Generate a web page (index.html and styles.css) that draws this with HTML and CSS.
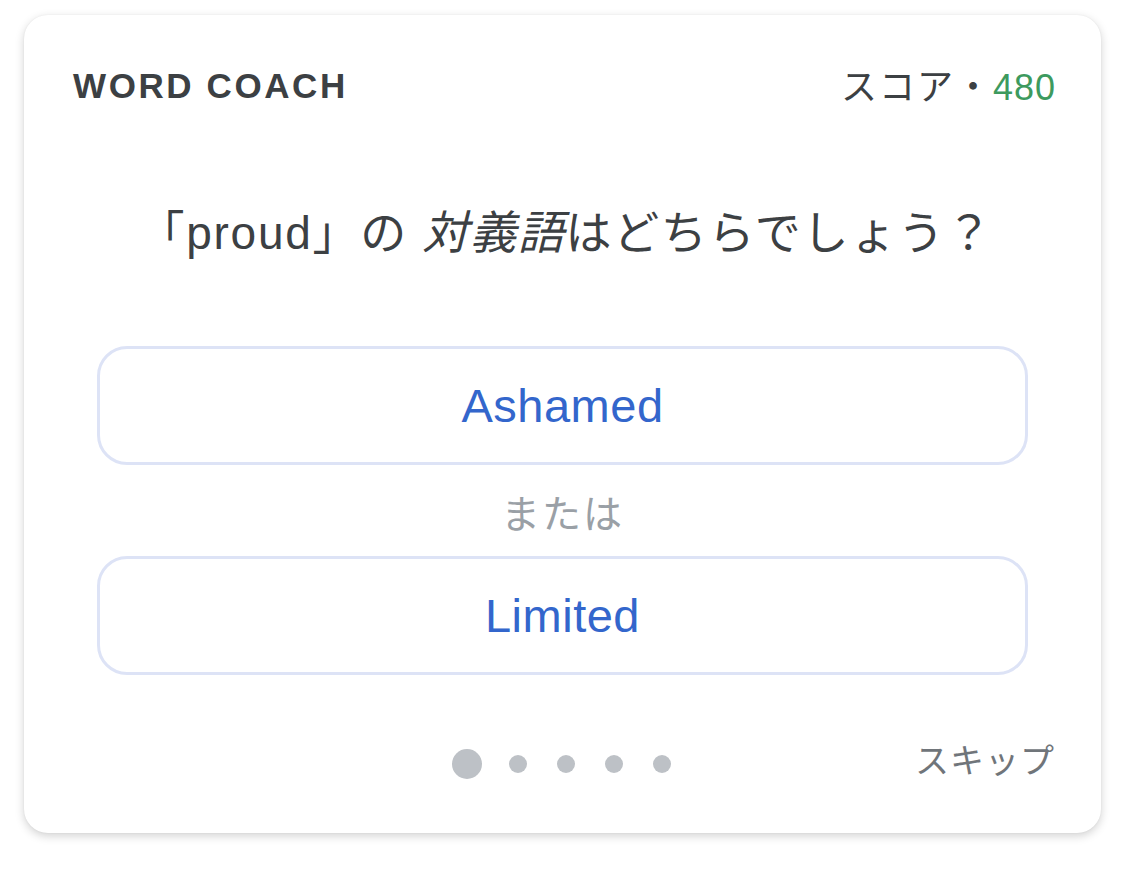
FILE: index.html
```html
<!DOCTYPE html>
<html lang="ja">
<head>
<meta charset="utf-8">
<link rel="stylesheet" href="styles.css">
</head>
<body>
<div class="card">
  <div class="header">
    <div class="title">WORD COACH</div>
    <div class="score">スコア・<span class="num">480</span></div>
  </div>
  <div class="question">「proud」の <em>対義語</em>はどちらでしょう？</div>
  <div class="options">
    <div class="option">Ashamed</div>
    <div class="or">または</div>
    <div class="option">Limited</div>
  </div>
  <div class="footer">
    <div class="dots">
      <span class="dot active"></span>
      <span class="dot"></span>
      <span class="dot"></span>
      <span class="dot"></span>
      <span class="dot"></span>
    </div>
    <div class="skip">スキップ</div>
  </div>
</div>
</body>
</html>
```
FILE: styles.css
```css
html, body {
  margin: 0;
  padding: 0;
  background: #ffffff;
}
body {
  padding: 15px 23px 52px 24px;
  font-family: "Liberation Sans", "Noto Sans CJK JP", sans-serif;
}
.card {
  width: 1077px;
  height: 818px;
  box-sizing: border-box;
  background: #fff;
  border-radius: 24px;
  box-shadow: 0 3px 10px rgba(0,0,0,0.18), 0 0 2px rgba(0,0,0,0.06);
  padding: 47px 46px 0 49px;
  display: flex;
  flex-direction: column;
}
.header {
  display: flex;
  justify-content: space-between;
  align-items: center;
  height: 48px;
}
.title {
  font-size: 35px;
  font-weight: bold;
  letter-spacing: 2.6px;
  color: #3c4043;
}
.score {
  font-size: 36px;
  color: #3c4043;
  letter-spacing: 2px;
  margin-right: -1px;
  margin-top: -4px;
}
.score .num {
  color: #3d9a5e;
  letter-spacing: 1px;
}
.question {
  margin-top: 93px;
  text-align: center;
  font-size: 46px;
  color: #3c4043;
  line-height: 60px;
  padding-left: 4px;
  letter-spacing: 1.7px;
}
.question em {
  font-style: italic;
}
.options {
  margin: 83px 27px 0 24px;
  display: flex;
  flex-direction: column;
}
.option {
  height: 119px;
  box-sizing: border-box;
  border: 3px solid #dde3f6;
  border-radius: 30px;
  display: flex;
  align-items: center;
  justify-content: center;
  font-size: 47px;
  letter-spacing: 0.5px;
  color: #3366cc;
}
.or {
  height: 91px;
  display: flex;
  align-items: center;
  justify-content: center;
  font-size: 39px;
  letter-spacing: 2px;
  color: #9aa0a6;
}
.footer {
  margin-top: 62px;
  display: flex;
  align-items: center;
  justify-content: flex-end;
  position: relative;
  height: 48px;
}
.dots {
  position: absolute;
  left: 379px;
  top: 12px;
  display: flex;
  align-items: center;
  gap: 30px;
}
.dot {
  width: 18px;
  height: 18px;
  border-radius: 50%;
  background: #bdc1c6;
}
.dot.active {
  width: 30px;
  height: 30px;
  margin-right: -3px;
}
.skip {
  font-size: 34px;
  color: #70757a;
  letter-spacing: 1px;
  margin-top: -5px;
}
```
